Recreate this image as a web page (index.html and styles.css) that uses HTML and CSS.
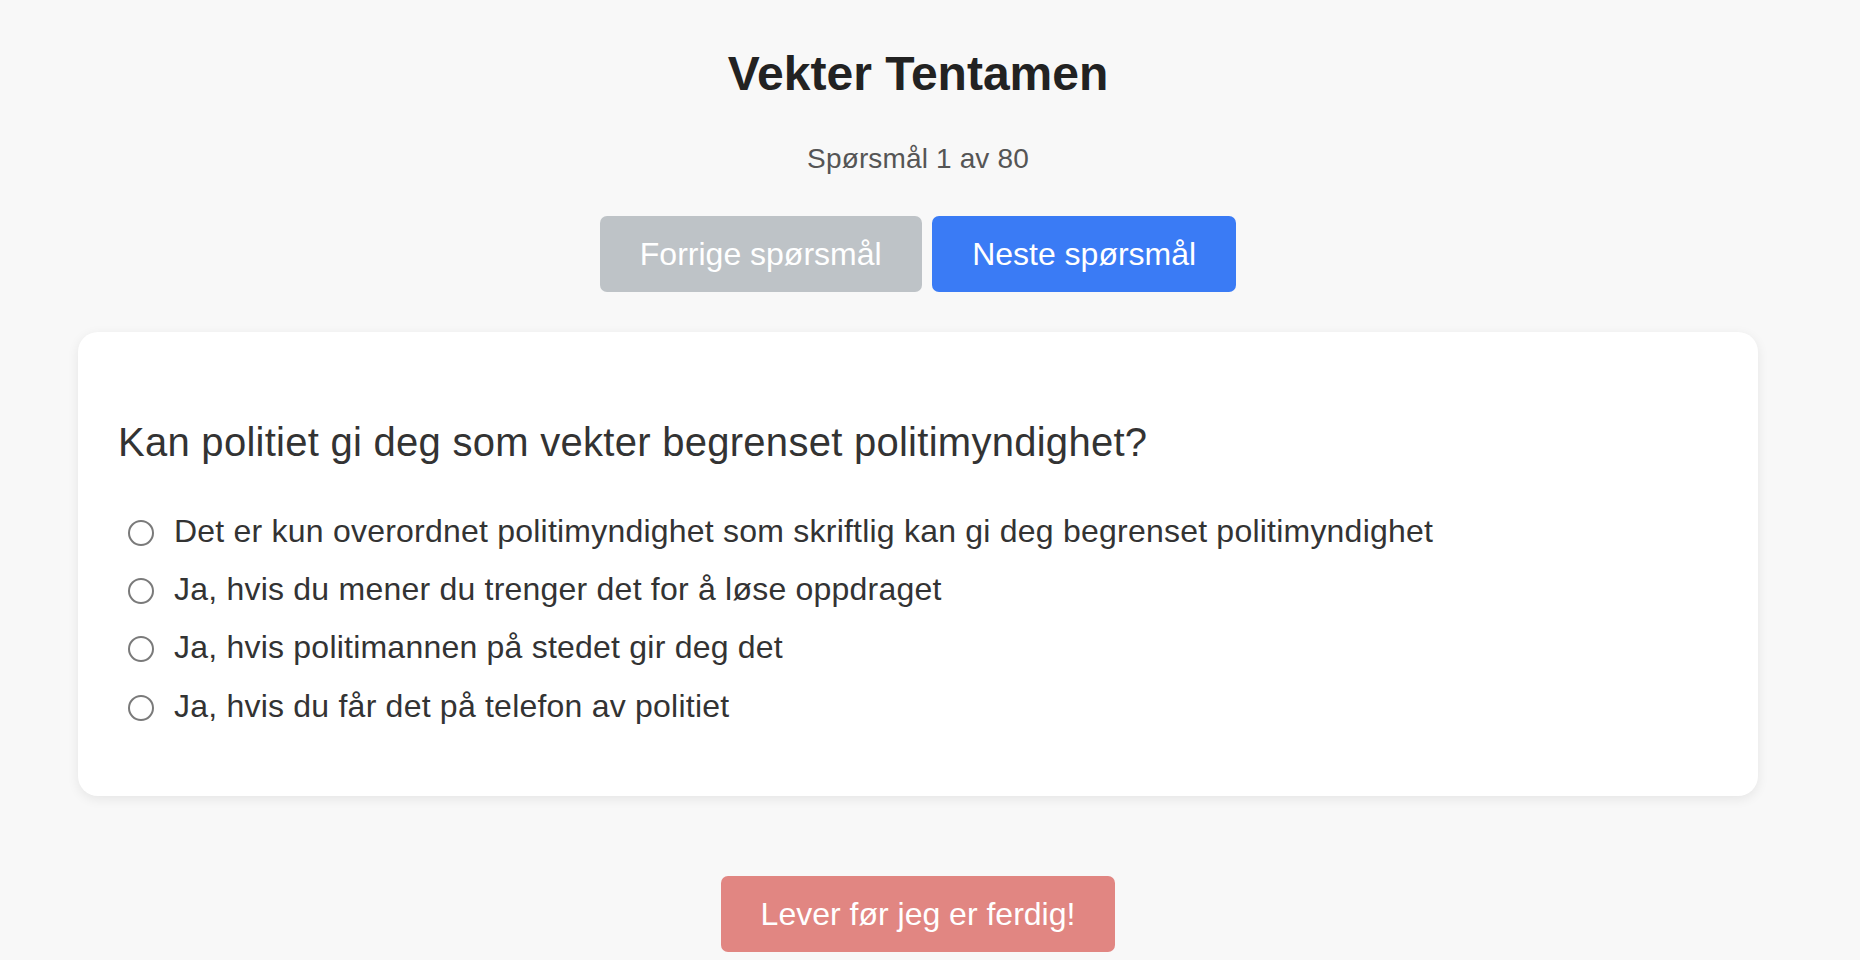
FILE: index.html
```html
<!DOCTYPE html>
<html lang="no">
<head>
<meta charset="utf-8">
<title>Vekter Tentamen</title>
<link rel="stylesheet" href="styles.css">
</head>
<body>
<main class="page">
  <h1 class="title">Vekter Tentamen</h1>
  <p class="counter">Spørsmål 1 av 80</p>
  <div class="nav">
    <button class="btn btn-prev" disabled>Forrige spørsmål</button>
    <button class="btn btn-next">Neste spørsmål</button>
  </div>
  <section class="card">
    <h2 class="question">Kan politiet gi deg som vekter begrenset politimyndighet?</h2>
    <div class="options">
      <label class="option"><input type="radio" name="q1" class="radio"><span>Det er kun overordnet politimyndighet som skriftlig kan gi deg begrenset politimyndighet</span></label>
      <label class="option"><input type="radio" name="q1" class="radio"><span>Ja, hvis du mener du trenger det for å løse oppdraget</span></label>
      <label class="option"><input type="radio" name="q1" class="radio"><span>Ja, hvis politimannen på stedet gir deg det</span></label>
      <label class="option"><input type="radio" name="q1" class="radio"><span>Ja, hvis du får det på telefon av politiet</span></label>
    </div>
  </section>
  <div class="submit-row">
    <button class="btn btn-submit">Lever før jeg er ferdig!</button>
  </div>
</main>
</body>
</html>
```
FILE: styles.css
```css
* { box-sizing: border-box; }
html, body { margin: 0; padding: 0; }
body {
  background: #f8f8f8;
  font-family: "Liberation Sans", Arial, Helvetica, sans-serif;
  color: #333;
  height: 960px;
  overflow: hidden;
}
.page {
  width: 1836px;
  display: flex;
  flex-direction: column;
  align-items: center;
}
.title {
  margin: 46px 0 0;
  font-size: 48px;
  line-height: 56px;
  font-weight: bold;
  color: #222;
}
.counter {
  margin: 41px 0 0;
  font-size: 28px;
  line-height: 32px;
  color: #555;
  letter-spacing: 0.15px;
}
.nav {
  margin-top: 41px;
  display: flex;
  gap: 10.5px;
}
.btn {
  font-family: "Liberation Sans", Arial, Helvetica, sans-serif;
  font-size: 32px;
  line-height: 36px;
  padding: 20px 40px;
  border: none;
  border-radius: 7px;
  color: #fff;
  cursor: pointer;
}
.btn-prev { background: #bec3c7; }
.btn-next { background: #3a7bf5; }
.card {
  align-self: stretch;
  margin: 40px 78px 0;
  background: #fff;
  border-radius: 20px;
  box-shadow: 0 3px 12px rgba(0, 0, 0, 0.08);
  padding: 40px 40px 40px;
}
.question {
  margin: 47px 0 0;
  font-size: 40px;
  line-height: 46px;
  font-weight: normal;
  color: #333;
  letter-spacing: 0.27px;
}
.options {
  margin: 48px 0 32px;
  display: flex;
  flex-direction: column;
  gap: 22.2px;
}
.option {
  display: flex;
  align-items: center;
  font-size: 32px;
  line-height: 36px;
  color: #333;
  letter-spacing: 0.22px;
}
.radio {
  appearance: none;
  -webkit-appearance: none;
  width: 26px;
  height: 26px;
  margin: 4px 20px 0 10px;
  border: 2px solid #7a7a7a;
  border-radius: 50%;
  background: #fff;
  flex: none;
}
.submit-row {
  margin-top: 80px;
  display: flex;
  justify-content: center;
}
.btn-submit {
  background: #e18682;
  padding: 20px 40px;
}
```
